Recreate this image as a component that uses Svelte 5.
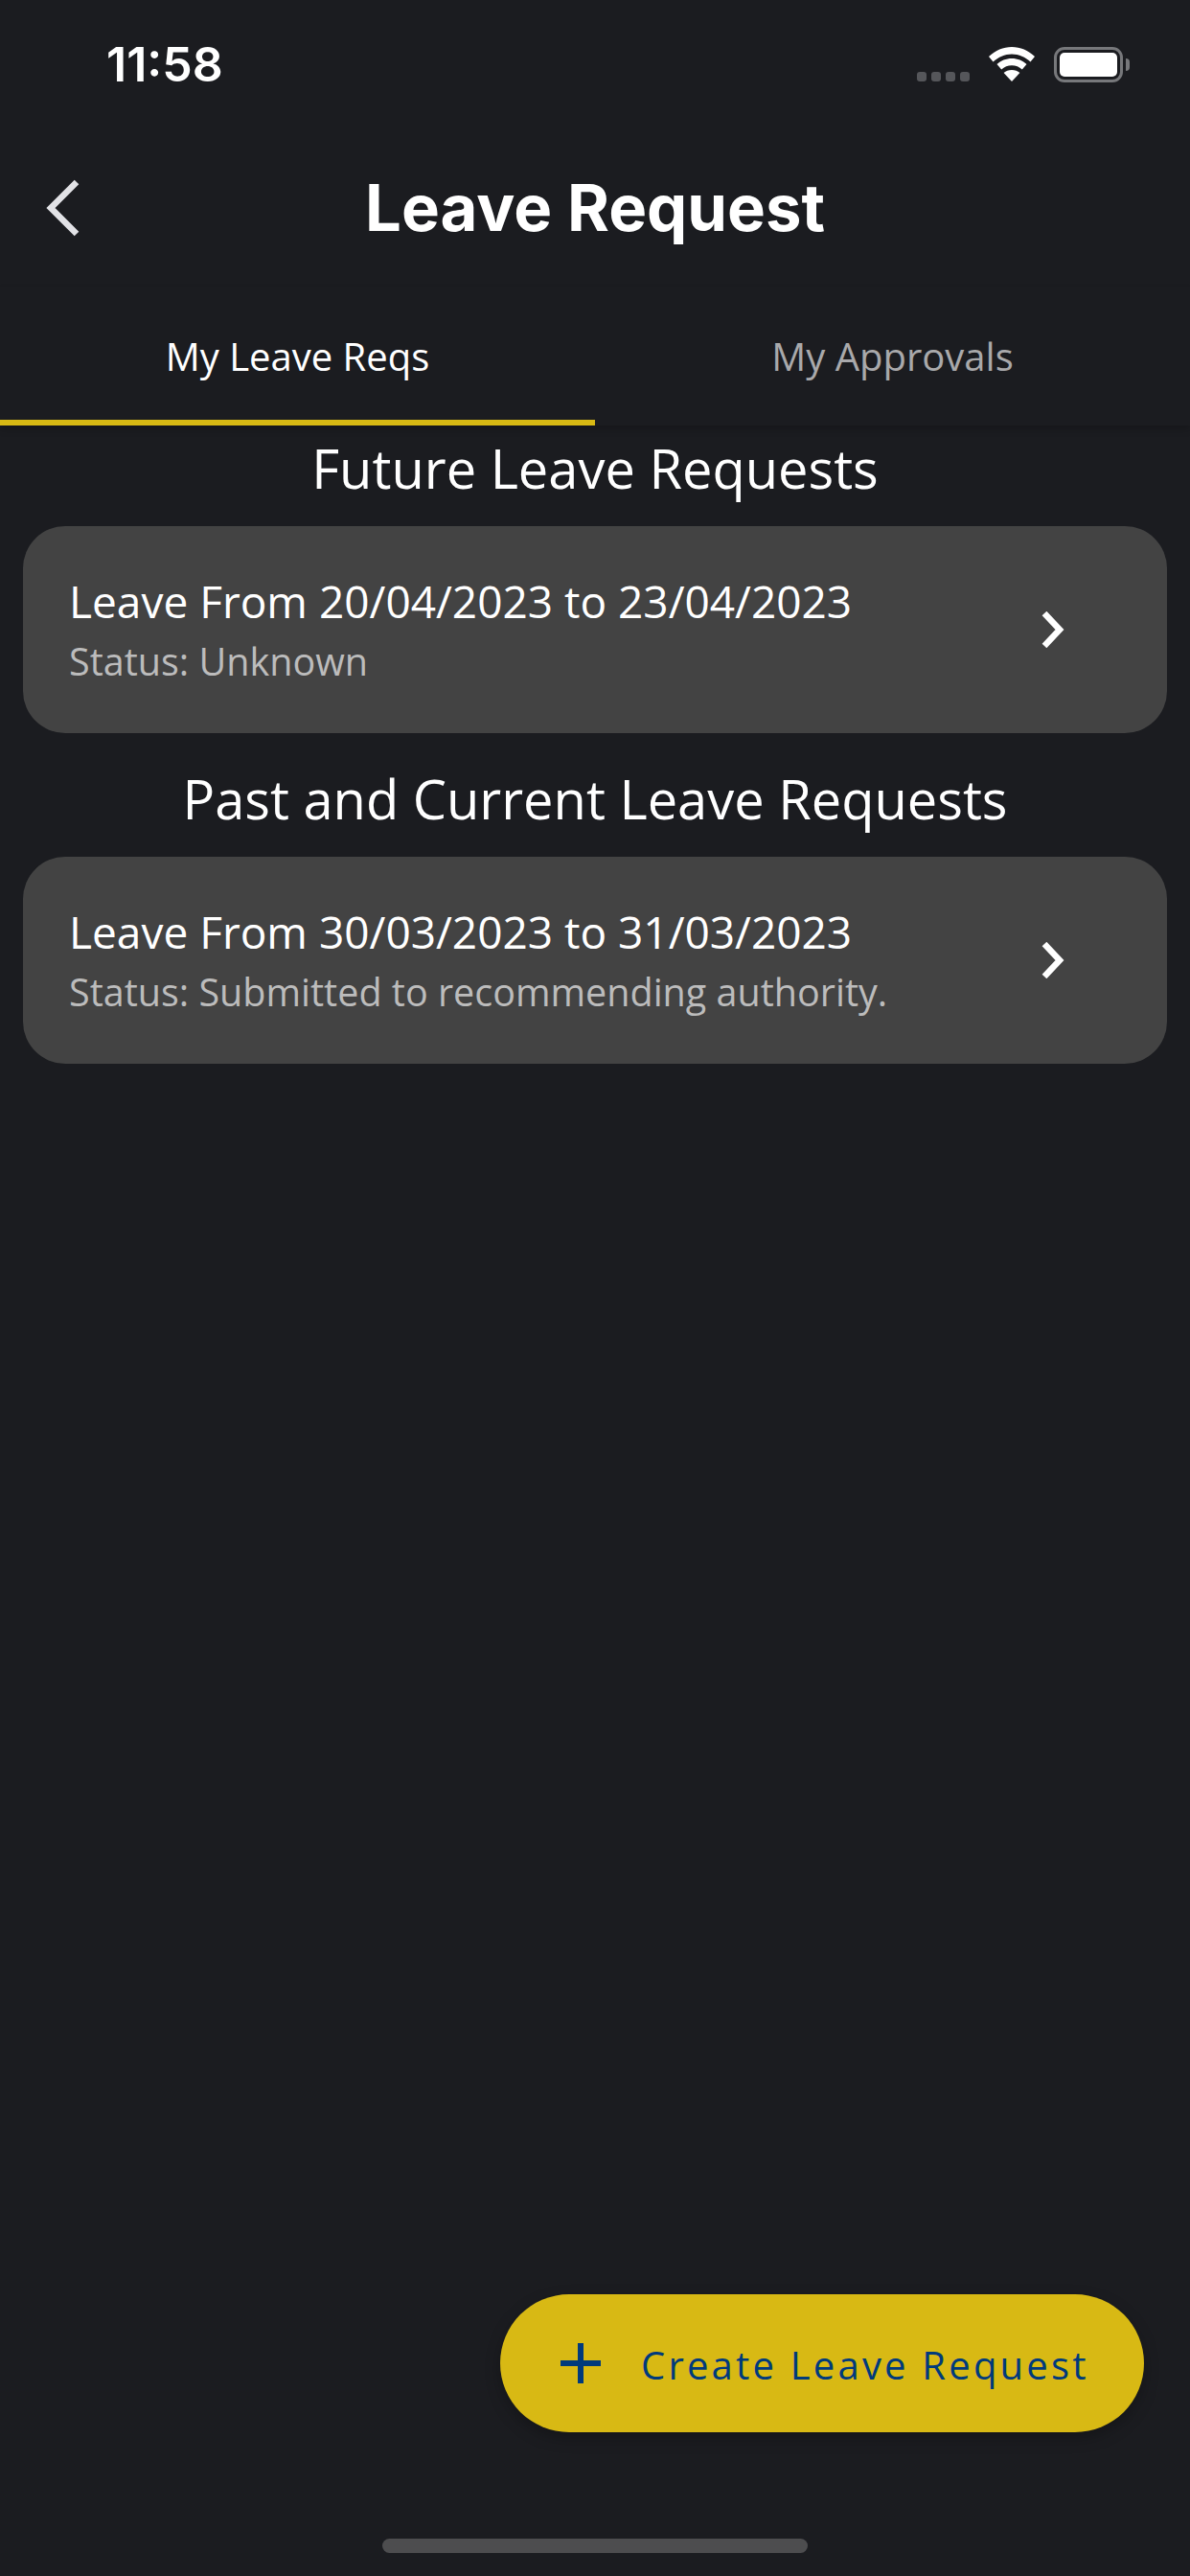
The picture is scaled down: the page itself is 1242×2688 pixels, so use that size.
<script lang="ts">
  const sections = [
    { title: 'Future Leave Requests', items: [{ range: 'Leave From 20/04/2023 to 23/04/2023', status: 'Status: Unknown' }] },
    { title: 'Past and Current Leave Requests', items: [{ range: 'Leave From 30/03/2023 to 31/03/2023', status: 'Status: Submitted to recommending authority.' }] }
  ];
</script>

<div class="screen">
  <div class="status-bar">
    <span class="time">11:58</span>
    <div class="status-icons">
      <div class="signal"><i></i><i></i><i></i><i></i></div>
      <svg class="wifi" width="48" height="36" viewBox="0 0 48 36">
        <path d="M24 0C15 0 7 3.500 0 10l4.500 5.500C10 10.500 16.500 7.500 24 7.500s14 3 19.500 8L48 10C41 3.500 33 0 24 0z" fill="#fff"/>
        <path d="M24 12c-6 0-11.500 2.200-15.500 6l4.700 5.500c3-2.700 6.700-4.200 10.800-4.200s7.800 1.500 10.800 4.200l4.700-5.500C35.500 14.200 30 12 24 12z" fill="#fff"/>
        <path d="M24 24c-3.300 0-6.200 1.100-8.400 3L24 36l8.400-9c-2.200-1.900-5.100-3-8.400-3z" fill="#fff"/>
      </svg>
      <div class="battery"><div class="battery-fill"></div></div>
    </div>
  </div>

  <header class="nav">
    <svg class="back" width="36" height="60" viewBox="0 0 36 60" fill="none">
      <path d="M32 3L5 30l27 27" stroke="#e2e2e6" stroke-width="6.500"/>
    </svg>
    <h1>Leave Request</h1>
  </header>

  <div class="tabs">
    <div class="tab active">My Leave Reqs</div>
    <div class="tab">My Approvals</div>
  </div>

  <main class="content">
    {#each sections as section}
      <section>
        <h2>{section.title}</h2>
        {#each section.items as item}
          <div class="card">
            <div class="card-text">
              <div class="range">{item.range}</div>
              <div class="status">{item.status}</div>
            </div>
            <svg class="chevron" width="26" height="38" viewBox="0 0 26 38" fill="none">
              <path d="M4 2l16 17L4 36" stroke="#fff" stroke-width="6.500"/>
            </svg>
          </div>
        {/each}
      </section>
    {/each}
  </main>

  <button class="fab">
    <svg width="42" height="42" viewBox="0 0 42 42">
      <path d="M18 0h6v18h18v6H24v18h-6V24H0v-6h18z" fill="#003a7c"/>
    </svg>
    <span>Create Leave Request</span>
  </button>

  <div class="home-indicator"></div>
</div>

<style>
  :global(body) {
    margin: 0;
    background: #1b1c20;
  }

  .screen {
    position: relative;
    display: flex;
    flex-direction: column;
    width: 1242px;
    height: 2688px;
    overflow: hidden;
    background: #1b1c20;
    color: #fff;
    font-family: "Open Sans", sans-serif;
  }

  .status-bar {
    display: flex;
    align-items: flex-start;
    justify-content: space-between;
    height: 130px;
    padding: 40px 70px 0 111px;
    box-sizing: border-box;
  }

  .time {
    font-family: Inter, sans-serif;
    font-size: 50px;
    font-weight: 600;
    line-height: 54px;
  }

  .status-icons {
    display: flex;
    align-items: flex-start;
    padding-top: 9px;
  }

  .signal {
    display: flex;
    gap: 5px;
    margin: 26px 20px 0 0;
  }

  .signal i {
    width: 10px;
    height: 10px;
    border-radius: 3px;
    background: #55565a;
  }

  .wifi {
    margin-right: 20px;
  }

  .battery {
    position: relative;
    width: 72px;
    height: 37px;
    box-sizing: border-box;
    padding: 3px;
    border: 3px solid #77787b;
    border-radius: 11px;
  }

  .battery::after {
    content: "";
    position: absolute;
    top: 9px;
    right: -10px;
    width: 4px;
    height: 13px;
    border-radius: 0 4px 4px 0;
    background: #77787b;
  }

  .battery-fill {
    height: 100%;
    border-radius: 5px;
    background: #fff;
  }

  .nav {
    position: relative;
    display: flex;
    align-items: center;
    justify-content: center;
    height: 170px;
  }

  .back {
    position: absolute;
    left: 48px;
    top: 57px;
  }

  h1 {
    margin: 0;
    padding-top: 2px;
    font-family: Inter, sans-serif;
    font-size: 67px;
    font-weight: 700;
    line-height: 1;
  }

  .tabs {
    display: flex;
    height: 144px;
    box-shadow: 0 4px 8px rgba(0, 0, 0, 0.2);
  }

  .tab {
    flex: 1;
    box-sizing: border-box;
    padding-top: 44px;
    text-align: center;
    font-size: 40px;
    line-height: 56px;
    color: #a9a9ab;
  }

  .tab.active {
    color: #fff;
    border-bottom: 6px solid #d8b914;
  }

  .content {
    display: flex;
    flex-direction: column;
    gap: 24px;
    padding: 0 24px;
  }

  h2 {
    height: 105px;
    margin: 0;
    box-sizing: border-box;
    padding-top: 11px;
    text-align: center;
    font-size: 56px;
    font-weight: 400;
    line-height: 66px;
  }

  .card {
    display: flex;
    align-items: center;
    justify-content: space-between;
    height: 216px;
    box-sizing: border-box;
    padding: 0 106px 0 48px;
    border-radius: 44px;
    background: #434343;
  }

  .range {
    margin-top: -2px;
    font-size: 46px;
    line-height: 62px;
  }

  .status {
    margin-top: 6px;
    font-size: 39.500px;
    line-height: 52px;
    color: #bcbcbc;
  }

  .fab {
    position: absolute;
    left: 522px;
    top: 2394px;
    display: flex;
    align-items: center;
    gap: 42px;
    width: 672px;
    height: 144px;
    box-sizing: border-box;
    padding: 2px 0 0 63px;
    border: none;
    border-radius: 72px;
    background: #d8b914;
    box-shadow: 0 6px 16px rgba(0, 0, 0, 0.25);
    color: #003a7c;
    font-family: "Open Sans", sans-serif;
    font-size: 40px;
    letter-spacing: 3.200px;
  }

  .fab svg {
    margin-top: -2px;
  }

  .home-indicator {
    position: absolute;
    left: 399px;
    top: 2649px;
    width: 444px;
    height: 15px;
    border-radius: 8px;
    background: #4d4d4f;
  }
</style>
